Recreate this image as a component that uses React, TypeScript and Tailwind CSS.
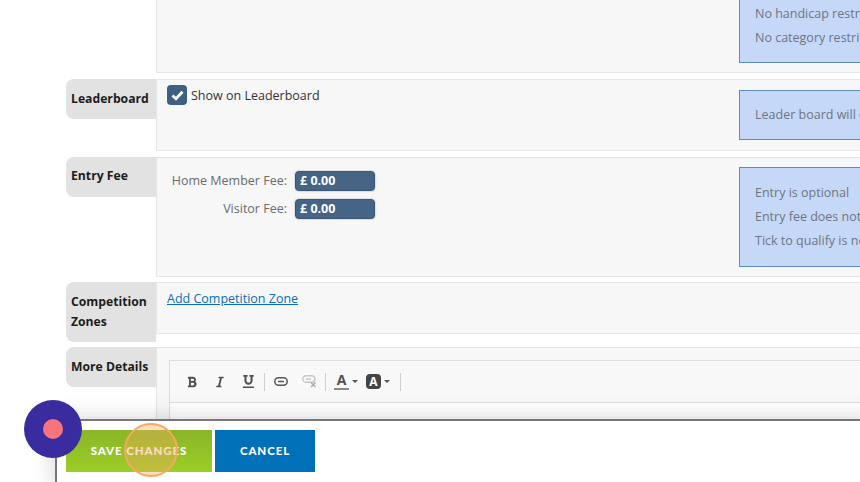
import {FaBold, FaItalic, FaUnderline} from "react-icons/fa";

const font = {fontFamily: '"Open Sans", sans-serif'};

const Hint = ({lines, className}: {lines: string[]; className: string}) => {
    return (
        <div className={`flex flex-col justify-end w-[200px] shrink-0 overflow-hidden border border-[#5b8bc9] bg-[#c6d8f8] pl-[15px] text-[12.5px] leading-6 text-[#6e7580] whitespace-nowrap ${className}`}>
            {lines.map((line) => <p key={line}>{line}</p>)}
        </div>
    )
}

const Label = ({children, className}: {children: React.ReactNode; className: string}) => {
    return (
        <div className={`flex items-center w-[90px] shrink-0 rounded-l-lg bg-[#e2e2e2] pl-[5px] text-[12.2px] leading-5 font-bold text-[#1c1c1c] ${className}`}>
            <span>{children}</span>
        </div>
    )
}

const Panel = ({children, className}: {children: React.ReactNode; className: string}) => {
    return (
        <div className={`flex w-[800px] shrink-0 border border-r-0 border-[#e6e6e6] bg-[#f7f7f7] ${className}`}>
            {children}
        </div>
    )
}

const FeeField = ({label}: {label: string}) => {
    return (
        <div className="flex items-center h-5">
            <span className="w-[130px] text-right text-[12.5px] text-[#6b6b6b]">{label}</span>
            <span className="flex items-center ml-2 h-5 w-20 rounded bg-[#466485] border border-[#3a5674] pl-1 pt-px text-[12.5px] font-bold text-white shadow-[0_0_2px_rgba(0,0,0,0.35)]">£ 0.00</span>
        </div>
    )
}

const Sep = () => <span className="w-px h-[18px] bg-[#cfcfcf] mx-[2px]"></span>;

const Caret = () => <span className="ml-[3px] border-x-[3px] border-t-[3px] border-x-transparent border-t-[#555555]"></span>;

const Toolbar = () => {
    return (
        <div className="flex items-center h-[42px] border-b border-[#dddddd] bg-[#f8f8f8] pl-2 text-[#505050]">
            <span className="flex justify-center w-7"><FaBold size={12}/></span>
            <span className="flex justify-center w-7"><FaItalic size={12}/></span>
            <span className="flex justify-center w-7"><FaUnderline size={13}/></span>
            <Sep/>
            <span className="flex justify-center w-7">
                <svg width="14" height="9" viewBox="0 0 14 9" fill="none" stroke="#555555" strokeWidth="1.5">
                    <rect x="0.8" y="0.8" width="12.4" height="7.4" rx="3.7"/>
                    <path d="M4 4.5h6"/>
                </svg>
            </span>
            <span className="flex justify-center w-7">
                <svg width="15" height="13" viewBox="0 0 15 13" fill="none" stroke="#c8c8c8" strokeWidth="1.4">
                    <rect x="0.8" y="0.8" width="12" height="6.4" rx="3.2"/>
                    <path d="M4 4h5"/>
                    <path d="M9 7.5l4.5 4.5M13.5 7.5L9 12" stroke="#aaaaaa"/>
                </svg>
            </span>
            <Sep/>
            <span className="flex items-center pl-[6px] w-[38px]">
                <span className="flex justify-center w-[15px] border-b-2 border-[#888888] text-[14px] leading-[14px] font-bold pb-px">A</span>
                <Caret/>
            </span>
            <span className="flex items-center w-[32px]">
                <span className="flex justify-center w-[15px] h-[15px] rounded-sm bg-[#444444] text-[12px] leading-[15px] font-bold text-white">A</span>
                <Caret/>
            </span>
            <Sep/>
        </div>
    )
}

export default function App() {
    return (
        <div className="relative w-[860px] h-[482px] overflow-hidden bg-white" style={font}>
            <div className="flex flex-col gap-y-[6px] pl-[66px]">
                <div className="flex">
                    <div className="w-[90px] shrink-0"></div>
                    <Panel className="h-[73px] border-t-0 pb-[10px]">
                        <div className="w-[582px] shrink-0"></div>
                        <Hint className="h-[63px] border-t-0 pb-3" lines={["No handicap restrictions", "No category restrictions"]}/>
                    </Panel>
                </div>

                <div className="flex items-start">
                    <Label className="h-10">Leaderboard</Label>
                    <Panel className="h-[72px] items-start pt-[10px]">
                        <div className="w-[582px] shrink-0 -mt-[5px] pl-[10px] flex items-center gap-x-1">
                            <span className="flex items-center justify-center size-5 rounded bg-[#3f5f80]">
                                <svg width="13" height="11" viewBox="0 0 13 11" fill="none" stroke="white" strokeWidth="2.8"><path d="M1.5 5.5l3.5 3.3 6.5-7"/></svg>
                            </span>
                            <span className="pt-0.5 text-[12.5px] text-[#333333]">Show on Leaderboard</span>
                        </div>
                        <Hint className="h-[50px] pb-[12px]" lines={["Leader board will only show members"]}/>
                    </Panel>
                </div>

                <div className="flex items-start">
                    <Label className="h-10 pb-0.5">Entry Fee</Label>
                    <Panel className="h-[120px] pt-[9px]">
                        <div className="flex flex-col gap-y-2 w-[582px] shrink-0 pt-[4px]">
                            <FeeField label="Home Member Fee:"/>
                            <FeeField label="Visitor Fee:"/>
                        </div>
                        <Hint className="h-[100px] pb-[13px]" lines={["Entry is optional", "Entry fee does not apply to all", "Tick to qualify is not required"]}/>
                    </Panel>
                </div>

                <div className="flex items-start -mt-px">
                    <Label className="h-[60px]">Competition Zones</Label>
                    <Panel className="h-[52px] pl-[10px] pt-[7px]">
                        <a className="h-5 text-[12.5px] text-[#0b6cbf] underline">Add Competition Zone</a>
                    </Panel>
                </div>

                <div className="flex items-start -mt-px">
                    <Label className="h-10">More Details</Label>
                    <Panel className="h-[200px] pl-3 pt-3">
                        <div className="w-full h-[180px] border border-r-0 border-[#dddddd] bg-white">
                            <Toolbar/>
                        </div>
                    </Panel>
                </div>
            </div>

            <div className="absolute left-[55px] top-[419px] flex gap-x-[3px] w-[820px] h-[70px] border-t-2 border-l-2 border-t-[#777777] border-l-[#777777] bg-white pl-[9px] pt-[9px] shadow-[0_0_24px_rgba(0,0,0,0.18)]">
                <button className="h-[42px] w-[146px] bg-gradient-to-b from-[#89b627] to-[#9dcd27] text-[11.5px] font-black tracking-[0.9px] text-white" style={{fontFamily: "Lato, sans-serif"}}>SAVE CHANGES</button>
                <button className="h-[42px] w-[100px] bg-[#0071b9] text-[11.5px] font-black tracking-[0.9px] text-white" style={{fontFamily: "Lato, sans-serif"}}>CANCEL</button>
            </div>

            <div className="absolute left-[124px] top-[423px] size-[54px] rounded-full border-2 border-[#f6a95f] bg-[#f6a95f]/40"></div>
            <div className="absolute left-6 top-[400px] flex items-center justify-center size-[58px] rounded-full bg-[#3a2b9f]">
                <span className="size-5 rounded-full bg-[#f8737b]"></span>
            </div>
        </div>
    )
}
